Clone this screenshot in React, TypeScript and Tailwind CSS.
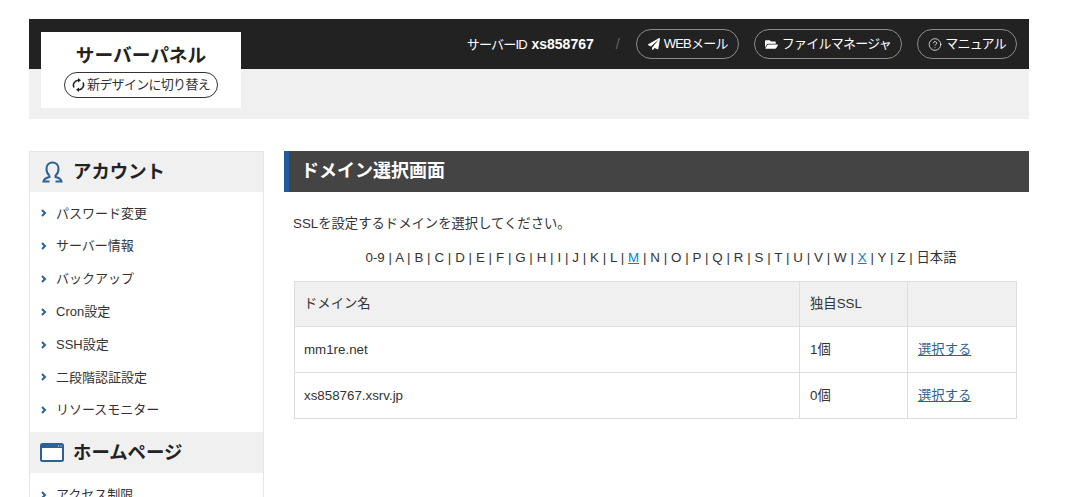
import { FaFolderOpen, FaPaperPlane } from "react-icons/fa";
import { CircleHelp } from "lucide-react";

const accountLinks = [
  "パスワード変更",
  "サーバー情報",
  "バックアップ",
  "Cron設定",
  "SSH設定",
  "二段階認証設定",
  "リソースモニター",
];

const letters = "0-9 A B C D E F G H I J K L M N O P Q R S T U V W X Y Z 日本語".split(" ");

const domains = [
  { name: "mm1re.net", count: "1個" },
  { name: "xs858767.xsrv.jp", count: "0個" },
];

function SyncIcon() {
  return (
    <svg width="13" height="14" viewBox="0 0 13 14" fill="none" className="shrink-0">
      <path d="M2 9.500A5 5 0 0 1 6 2.200" stroke="#222" strokeWidth="1.600" />
      <path d="M11 4.500A5 5 0 0 1 7 11.800" stroke="#222" strokeWidth="1.600" />
      <path d="M6 0l3 2.300-3 2.300zM7 9.400l-3 2.300 3 2.300z" fill="#222" />
    </svg>
  );
}

function UserIcon() {
  return (
    <svg width="21" height="22" viewBox="0 0 21 22" fill="none" stroke="#2a6298" strokeWidth="2" className="shrink-0">
      <path d="M7.500 14.500C5.500 13 4.500 10.500 4.500 8 4.500 4 7 1.500 10.500 1.500S16.500 4 16.500 8c0 2.500-1 5-3 6.500V16c3 .7 5.500 1.800 6 4.500h-6M7.500 14.500V16c-3 .7-5.500 1.800-6 4.500h6" />
    </svg>
  );
}

function WindowIcon() {
  return (
    <svg width="24" height="19" viewBox="0 0 24 19" className="shrink-0">
      <rect x="1" y="1" width="22" height="17" rx="1.500" fill="#fff" stroke="#2a6298" strokeWidth="2" />
      <rect x="1" y="1" width="22" height="4" fill="#2a6298" />
      <path d="M18 3h1M20.500 3h1" stroke="#fff" strokeWidth="1" />
    </svg>
  );
}

function SideHeading({ icon, title }: { icon: React.ReactNode; title: string }) {
  return (
    <h3 className="h-10 flex items-center gap-[9px] pl-[10px] bg-[#f0f0f0] text-[18.4px] font-bold text-[#222]">
      <span className="w-6 flex justify-center">{icon}</span>
      {title}
    </h3>
  );
}

function SideLink({ label }: { label: string }) {
  return (
    <li className="h-[32.8px] flex items-center gap-[9px] pl-[11px] text-[13px] text-[#333]">
      <svg width="6" height="8" viewBox="0 0 6 8" fill="none" stroke="#2a6298" strokeWidth="2" className="shrink-0">
        <path d="M1 1l3 3-3 3" />
      </svg>
      {label}
    </li>
  );
}

function HeaderButton({ icon, label }: { icon: React.ReactNode; label: string }) {
  return (
    <a className="h-[30px] flex items-center gap-[3px] px-[10px] rounded-full border border-[#8a8a8a] text-[13px] tracking-[-0.75px] text-white">
      <span className="w-[14px] flex justify-center">{icon}</span>
      {label}
    </a>
  );
}

export default function App() {
  return (
    <div className="h-[497px] overflow-hidden bg-white pt-[19px] pl-[29px] font-['Liberation_Sans','Noto_Sans_CJK_JP',sans-serif] text-[#333]">
      <div className="w-[1000px]">
        <header className="relative h-[100px] bg-[#f0f0f0]">
          <div className="h-[50px] bg-[#222] flex items-center justify-end gap-[15px] pr-3">
            <p className="text-white">
              <span className="text-[13px] tracking-[-0.75px]">サーバーID</span>{" "}
              <b className="text-[14px]">xs858767</b>
            </p>
            <span className="ml-[7px] mr-[1px] text-[14px] text-[#666]">/</span>
            <HeaderButton icon={<FaPaperPlane size={12} />} label="WEBメール" />
            <HeaderButton icon={<FaFolderOpen size={13} />} label="ファイルマネージャ" />
            <HeaderButton icon={<CircleHelp size={15} strokeWidth={1.25} />} label="マニュアル" />
          </div>
          <div className="absolute left-3 top-[13px] w-[200px] h-[76px] bg-white flex flex-col items-center pt-[12px]">
            <h1 className="text-[18.7px] leading-6 font-bold text-[#222]">サーバーパネル</h1>
            <a className="mt-[4px] h-[26px] w-[154px] flex items-center justify-center gap-[2px] rounded-full border border-[#333] text-[13px] tracking-[-0.7px] text-[#333]">
              <SyncIcon />
              新デザインに切り替え
            </a>
          </div>
        </header>

        <div className="mt-8 flex gap-5">
          <aside className="w-[235px] shrink-0 border-x border-t border-[#e6e6e6]">
            <SideHeading icon={<UserIcon />} title="アカウント" />
            <ul className="pt-[5px] pb-[5px]">
              {accountLinks.map((label) => (
                <SideLink key={label} label={label} />
              ))}
            </ul>
            <div className="pt-px bg-[#f0f0f0]">
              <SideHeading icon={<WindowIcon />} title="ホームページ" />
            </div>
            <ul className="pt-[6px]">
              <SideLink label="アクセス制限" />
            </ul>
          </aside>

          <main className="flex-1">
            <h2 className="h-[41px] flex items-center pl-[12px] bg-[#444] border-l-[5px] border-[#1f5c9e] text-[18px] font-bold text-white">
              ドメイン選択画面
            </h2>
            <div className="px-[10px] text-[13.33px]">
              <p className="mt-[22px] -ml-px leading-5">SSLを設定するドメインを選択してください。</p>
              <p className="mt-[14px] pl-[9px] text-center leading-5 [word-spacing:0.12px]">
                {letters.map((letter, i) => (
                  <span key={letter}>
                    {i > 0 && " | "}
                    {letter === "M" || letter === "X" ? (
                      <a className="text-[#0d7fc0] underline">{letter}</a>
                    ) : (
                      letter
                    )}
                  </span>
                ))}
              </p>
              <table className="mt-[13px] w-[723px] table-fixed border-collapse">
                <thead>
                  <tr className="h-[45px] bg-[#f0f0f0] text-left">
                    <th className="w-[505px] border border-[#ddd] pl-[9px] font-normal">ドメイン名</th>
                    <th className="w-[108px] border border-[#ddd] pl-[10px] font-normal">独自SSL</th>
                    <th className="border border-[#ddd] pl-[10px] font-normal"></th>
                  </tr>
                </thead>
                <tbody>
                  {domains.map((domain) => (
                    <tr key={domain.name} className="h-[46px]">
                      <td className="border border-[#ddd] pl-[9px]">{domain.name}</td>
                      <td className="border border-[#ddd] pl-[10px]">{domain.count}</td>
                      <td className="border border-[#ddd] pl-[10px]">
                        <a className="text-[#2a6298] underline">選択する</a>
                      </td>
                    </tr>
                  ))}
                </tbody>
              </table>
            </div>
          </main>
        </div>
      </div>
    </div>
  );
}
